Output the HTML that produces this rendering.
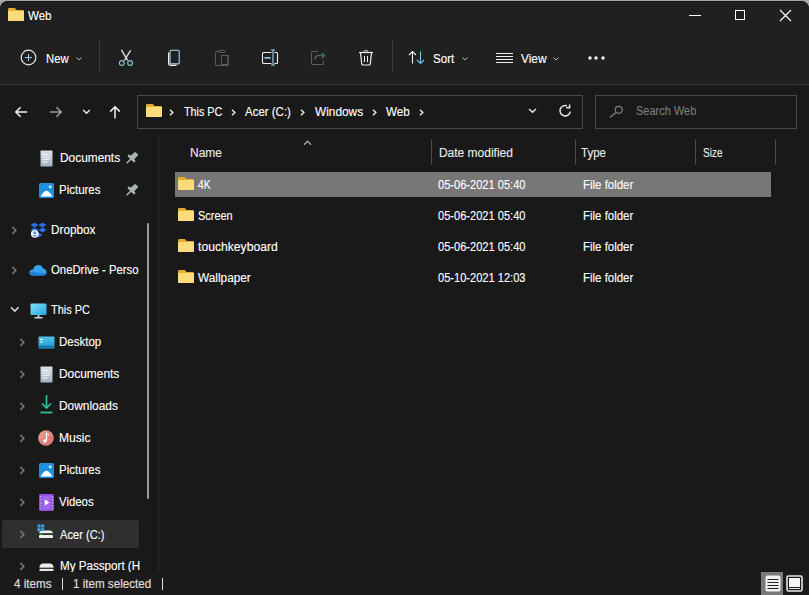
<!DOCTYPE html>
<html><head><meta charset="utf-8"><style>
html,body{margin:0;padding:0;width:809px;height:595px;overflow:hidden;background:#a8a8a8;}
body{position:relative;font-family:"Liberation Sans", sans-serif;}
.t{position:absolute;white-space:nowrap;font-family:"Liberation Sans", sans-serif;-webkit-text-stroke:0.12px currentColor;}
svg{overflow:visible;}
</style></head><body>
<div style="position:absolute;left:0px;top:0px;width:809px;height:595px;background:#a8a8a8;"></div>
<div style="position:absolute;left:0px;top:1px;width:809px;height:594px;background:#191919;border-radius:8px 8px 0 0;"></div>
<div style="position:absolute;left:0px;top:1px;width:809px;height:83px;background:#202020;border-radius:8px 8px 0 0;border-top:1px solid #161616;box-sizing:border-box;"></div>
<div style="position:absolute;left:0px;top:82px;width:809px;height:2px;background:#1d1d1d;"></div>
<div style="position:absolute;left:0px;top:84px;width:809px;height:1px;background:#383838;"></div>
<svg style="position:absolute;left:8px;top:8px;" width="16" height="13" viewBox="0 0 16 13"><path d="M0 1.2 Q0 0 1.2 0 H6.8 L8.6 2 H14.8 Q16 2 16 3.2 V11.8 Q16 13 14.8 13 H1.2 Q0 13 0 11.8 Z" fill="#e4ae36"/>
<path d="M0 4.2 Q0 3 1.2 3 H14.8 Q16 3 16 4.2 V11.8 Q16 13 14.8 13 H1.2 Q0 13 0 11.8 Z" fill="#fbdb7a"/></svg>
<div class="t" style="left:27.90px;top:8.74px;font-size:12px;line-height:15px;color:#ffffff;transform:scaleX(0.9603);transform-origin:0 0;">Web</div>
<div style="position:absolute;left:689px;top:15px;width:12px;height:1px;background:#ffffff;"></div>
<div style="position:absolute;left:735px;top:10px;width:10px;height:10px;background:transparent;border:1px solid #fff;box-sizing:border-box;"></div>
<svg style="position:absolute;left:779px;top:9px;" width="13" height="13" viewBox="0 0 13 13"><path d="M1 1 L12 12 M12 1 L1 12" stroke="#fff" stroke-width="1.1"/></svg>
<svg style="position:absolute;left:20px;top:49px;" width="17" height="17" viewBox="0 0 17 17"><circle cx="8.5" cy="8.5" r="7.3" fill="none" stroke="#e6e6e6" stroke-width="1.2"/><path d="M8.5 5 V12 M5 8.5 H12" stroke="#9ad4ea" stroke-width="1"/></svg>
<div class="t" style="left:45.80px;top:51.74px;font-size:12px;line-height:15px;color:#ffffff;transform:scaleX(0.9408);transform-origin:0 0;">New</div>
<svg style="position:absolute;left:75.5px;top:57px;" width="6" height="4" viewBox="0 0 6 4"><path d="M0.5 0.6 L3.0 3 L5.5 0.6" fill="none" stroke="#bdbdbd" stroke-width="1"/></svg>
<div style="position:absolute;left:99px;top:40px;width:1px;height:32px;background:#3a3a3a;"></div>
<svg style="position:absolute;left:118px;top:48px;" width="16" height="19" viewBox="0 0 16 19"><path d="M3.4 1.8 L9.6 12.4 M12.6 2.4 L6.4 12.4" stroke="#e6e0e0" stroke-width="1.3" fill="none"/><circle cx="3.8" cy="15" r="2.4" fill="none" stroke="#8cc4d4" stroke-width="1.1"/><circle cx="12.1" cy="15" r="2.4" fill="none" stroke="#8cc4d4" stroke-width="1.1"/></svg>
<svg style="position:absolute;left:166px;top:48px;" width="16" height="19" viewBox="0 0 16 19"><rect x="4" y="2.3" width="9.2" height="13.6" rx="1" fill="none" stroke="#a4d4ea" stroke-width="1.1"/><path d="M2.6 4.5 V15.8 Q2.6 17.3 4.2 17.3 H10.5" fill="none" stroke="#ececec" stroke-width="1.2"/></svg>
<svg style="position:absolute;left:214px;top:48px;" width="16" height="19" viewBox="0 0 16 19"><path d="M4 3.5 H2.5 Q1.5 3.5 1.5 4.5 V16.5 Q1.5 17.5 2.5 17.5 H13 Q14 17.5 14 16.5 V7" fill="none" stroke="#5a5a5a" stroke-width="1.1"/><rect x="4" y="2.5" width="7" height="2" rx="1" fill="none" stroke="#5a5a5a" stroke-width="1"/><rect x="7.5" y="7.5" width="6.5" height="9" fill="none" stroke="#5a5a5a" stroke-width="1"/></svg>
<svg style="position:absolute;left:261px;top:48px;" width="18" height="19" viewBox="0 0 18 19"><path d="M10.5 4.5 H2.5 Q1.5 4.5 1.5 5.5 V14.5 Q1.5 15.5 2.5 15.5 H10.5 M13.5 4.5 H15.5 Q16.5 4.5 16.5 5.5 V14.5 Q16.5 15.5 15.5 15.5 H13.5" fill="none" stroke="#f0f0f0" stroke-width="1.1"/><rect x="3.5" y="9" width="6" height="1.6" fill="#9fd4ea"/><path d="M12 2.5 V16.5 M10 2 H14 M10 17 H14" stroke="#9fd4ea" stroke-width="1.1" fill="none"/></svg>
<svg style="position:absolute;left:310px;top:48px;" width="17" height="19" viewBox="0 0 17 19"><path d="M8 3.5 H2.5 Q1.5 3.5 1.5 4.5 V15.5 Q1.5 16.5 2.5 16.5 H12.5 Q13.5 16.5 13.5 15.5 V13" fill="none" stroke="#5c5c5c" stroke-width="1.1"/><path d="M5 11.5 Q5 7.5 9 7.5 H14.5 M11.8 4.8 L14.5 7.5 L11.8 10.2" fill="none" stroke="#3d6570" stroke-width="1.6"/></svg>
<svg style="position:absolute;left:358px;top:48px;" width="16" height="19" viewBox="0 0 16 19"><path d="M1 4.5 H15" stroke="#f0f0f0" stroke-width="1.2"/><path d="M6 4 Q6 2.5 8 2.5 Q10 2.5 10 4" fill="none" stroke="#c8c8c8" stroke-width="1.1"/><path d="M2.5 5 L3.8 16.2 Q4 17 5 17 H11 Q12 17 12.2 16.2 L13.5 5" fill="none" stroke="#f0f0f0" stroke-width="1.2"/><path d="M6.5 8 V14 M9.5 8 V14" stroke="#f0f0f0" stroke-width="1"/></svg>
<div style="position:absolute;left:392px;top:40px;width:1px;height:32px;background:#3a3a3a;"></div>
<svg style="position:absolute;left:408px;top:50px;" width="19" height="15" viewBox="0 0 19 15"><path d="M4.5 1.5 V13.5 M1 5 L4.5 1.5 L8 5" fill="none" stroke="#f0f0f0" stroke-width="1.1"/><path d="M12.5 1.5 V13.5 M9 10 L12.5 13.5 L16 10" fill="none" stroke="#7cc0e6" stroke-width="1.1"/></svg>
<div class="t" style="left:433.20px;top:51.74px;font-size:12px;line-height:15px;color:#ffffff;transform:scaleX(0.9703);transform-origin:0 0;">Sort</div>
<svg style="position:absolute;left:462px;top:57px;" width="6" height="4" viewBox="0 0 6 4"><path d="M0.5 0.6 L3.0 3 L5.5 0.6" fill="none" stroke="#bdbdbd" stroke-width="1"/></svg>
<svg style="position:absolute;left:496px;top:52px;" width="17" height="12" viewBox="0 0 17 12"><path d="M0 1.5 H17 M0 4.5 H17 M0 7.5 H17 M0 10.5 H17" stroke="#f0f0f0" stroke-width="1"/></svg>
<div class="t" style="left:520.50px;top:51.74px;font-size:12px;line-height:15px;color:#ffffff;transform:scaleX(0.9913);transform-origin:0 0;">View</div>
<svg style="position:absolute;left:553px;top:57px;" width="6" height="4" viewBox="0 0 6 4"><path d="M0.5 0.6 L3.0 3 L5.5 0.6" fill="none" stroke="#bdbdbd" stroke-width="1"/></svg>
<svg style="position:absolute;left:587.5px;top:56px;" width="4" height="4" viewBox="0 0 4 4"><circle cx="2" cy="2" r="1.7" fill="#f2f2f2"/></svg>
<svg style="position:absolute;left:594px;top:56px;" width="4" height="4" viewBox="0 0 4 4"><circle cx="2" cy="2" r="1.7" fill="#f2f2f2"/></svg>
<svg style="position:absolute;left:600.5px;top:56px;" width="4" height="4" viewBox="0 0 4 4"><circle cx="2" cy="2" r="1.7" fill="#f2f2f2"/></svg>
<svg style="position:absolute;left:14px;top:106px;" width="14" height="12" viewBox="0 0 14 12"><path d="M13.2 6 H1.8 M6.6 1.2 L1.8 6 L6.6 10.8" fill="none" stroke="#f2f2f2" stroke-width="1.5"/></svg>
<svg style="position:absolute;left:49px;top:106px;" width="14" height="12" viewBox="0 0 14 12"><path d="M0.8 6 H12.2 M7.4 1.2 L12.2 6 L7.4 10.8" fill="none" stroke="#9c9c9c" stroke-width="1.5"/></svg>
<svg style="position:absolute;left:82px;top:108.5px;" width="10" height="7" viewBox="0 0 10 7"><path d="M1.2 1 L4.5 4.3 L7.8 1" fill="none" stroke="#ececec" stroke-width="1.5"/></svg>
<svg style="position:absolute;left:109px;top:105px;" width="13" height="14" viewBox="0 0 13 14"><path d="M6 13.5 V1.8 M1.2 6.6 L6 1.8 L10.8 6.6" fill="none" stroke="#f2f2f2" stroke-width="1.5"/></svg>
<div style="position:absolute;left:137px;top:95px;width:446px;height:34px;background:transparent;border:1px solid #484848;box-sizing:border-box;"></div>
<svg style="position:absolute;left:146px;top:104px;" width="16" height="13" viewBox="0 0 16 13"><path d="M0 1.2 Q0 0 1.2 0 H6.8 L8.6 2 H14.8 Q16 2 16 3.2 V11.8 Q16 13 14.8 13 H1.2 Q0 13 0 11.8 Z" fill="#e4ae36"/>
<path d="M0 4.2 Q0 3 1.2 3 H14.8 Q16 3 16 4.2 V11.8 Q16 13 14.8 13 H1.2 Q0 13 0 11.8 Z" fill="#fbdb7a"/></svg>
<svg style="position:absolute;left:169px;top:109.2px;" width="5" height="7" viewBox="0 0 5 7"><path d="M1 0.8 L3.8 3.5 L1 6.2" fill="none" stroke="#e6e6e6" stroke-width="1.5"/></svg>
<div class="t" style="left:183.60px;top:104.54px;font-size:12px;line-height:15px;color:#ffffff;transform:scaleX(0.8952);transform-origin:0 0;">This PC</div>
<svg style="position:absolute;left:231px;top:109.2px;" width="5" height="7" viewBox="0 0 5 7"><path d="M1 0.8 L3.8 3.5 L1 6.2" fill="none" stroke="#e6e6e6" stroke-width="1.5"/></svg>
<div class="t" style="left:245.30px;top:104.54px;font-size:12px;line-height:15px;color:#ffffff;transform:scaleX(0.9562);transform-origin:0 0;">Acer (C:)</div>
<svg style="position:absolute;left:300px;top:109.2px;" width="5" height="7" viewBox="0 0 5 7"><path d="M1 0.8 L3.8 3.5 L1 6.2" fill="none" stroke="#e6e6e6" stroke-width="1.5"/></svg>
<div class="t" style="left:314.60px;top:104.54px;font-size:12px;line-height:15px;color:#ffffff;transform:scaleX(0.9881);transform-origin:0 0;">Windows</div>
<svg style="position:absolute;left:371.5px;top:109.2px;" width="5" height="7" viewBox="0 0 5 7"><path d="M1 0.8 L3.8 3.5 L1 6.2" fill="none" stroke="#e6e6e6" stroke-width="1.5"/></svg>
<div class="t" style="left:386.00px;top:104.54px;font-size:12px;line-height:15px;color:#ffffff;transform:scaleX(0.9684);transform-origin:0 0;">Web</div>
<svg style="position:absolute;left:418.5px;top:109.2px;" width="5" height="7" viewBox="0 0 5 7"><path d="M1 0.8 L3.8 3.5 L1 6.2" fill="none" stroke="#e6e6e6" stroke-width="1.5"/></svg>
<svg style="position:absolute;left:527.5px;top:108.3px;" width="10" height="6" viewBox="0 0 10 6"><path d="M1 1 L4.5 4.3 L8 1" fill="none" stroke="#e6e6e6" stroke-width="1.4"/></svg>
<svg style="position:absolute;left:558px;top:104px;" width="14" height="14" viewBox="0 0 14 14"><path d="M12.3 7.6 A5.2 5.2 0 1 1 8.9 1.8" fill="none" stroke="#e8e8e8" stroke-width="1.5"/><path d="M8.3 3.8 H11.6 V0.4" fill="none" stroke="#f0f0f0" stroke-width="1.5"/></svg>
<div style="position:absolute;left:595px;top:95px;width:202px;height:34px;background:transparent;border:1px solid #484848;box-sizing:border-box;"></div>
<svg style="position:absolute;left:608px;top:105px;" width="16" height="14" viewBox="0 0 16 14"><circle cx="10.7" cy="4.8" r="3.5" fill="none" stroke="#7e7e7e" stroke-width="1.2"/><path d="M8.2 7.4 L1.8 12.6" stroke="#7e7e7e" stroke-width="1.3"/></svg>
<div class="t" style="left:636.00px;top:104.44px;font-size:12px;line-height:15px;color:#7c7c7c;transform:scaleX(0.9163);transform-origin:0 0;">Search Web</div>
<div style="position:absolute;left:158px;top:137px;width:1px;height:458px;background:#2a2a2a;"></div>
<div style="position:absolute;left:146.5px;top:223px;width:2px;height:276px;background:#9c9c9c;border-radius:1px;"></div>
<svg style="position:absolute;left:39.5px;top:149.5px;" width="13" height="17" viewBox="0 0 13 17"><defs><linearGradient id="dg" x1="0" y1="0" x2="0" y2="1"><stop offset="0" stop-color="#dde3ea"/><stop offset="1" stop-color="#a4b0c0"/></linearGradient></defs><rect x="0.5" y="0.5" width="12" height="16" rx="0.8" fill="url(#dg)"/><path d="M2.5 4.5 H7.5 M2.5 7 H9.5 M2.5 9.5 H9.5 M2.5 12 H7.5" stroke="#f4f6fa" stroke-width="1"/></svg>
<div class="t" style="left:59.80px;top:150.64px;font-size:12px;line-height:15px;color:#ffffff;transform:scaleX(0.9903);transform-origin:0 0;">Documents</div>
<svg style="position:absolute;left:124px;top:151px;" width="14" height="14" viewBox="0 0 14 14"><g transform="rotate(45 8 7)"><rect x="5.6" y="0.3" width="4.8" height="6.8" rx="1.2" fill="#a9b4b8"/><rect x="3.2" y="6.3" width="9.6" height="2.6" rx="1" fill="#a9b4b8"/><path d="M8 8.5 V14.5" stroke="#b8bcbe" stroke-width="1.4"/></g></svg>
<svg style="position:absolute;left:38.5px;top:182.5px;" width="15" height="15" viewBox="0 0 15 15"><rect x="0" y="0" width="15" height="15" rx="1.5" fill="#1e90e2"/><path d="M1.5 13.5 Q3 10.5 5 9 Q7.5 6.5 10 9 Q12 10.5 13.5 13.5 Z" fill="#ffffff"/><circle cx="11.2" cy="3.8" r="1.5" fill="#cfe8ff"/></svg>
<div class="t" style="left:59.30px;top:182.54px;font-size:12px;line-height:15px;color:#ffffff;transform:scaleX(0.9574);transform-origin:0 0;">Pictures</div>
<svg style="position:absolute;left:124px;top:183px;" width="14" height="14" viewBox="0 0 14 14"><g transform="rotate(45 8 7)"><rect x="5.6" y="0.3" width="4.8" height="6.8" rx="1.2" fill="#a9b4b8"/><rect x="3.2" y="6.3" width="9.6" height="2.6" rx="1" fill="#a9b4b8"/><path d="M8 8.5 V14.5" stroke="#b8bcbe" stroke-width="1.4"/></g></svg>
<svg style="position:absolute;left:11.0px;top:226px;" width="7" height="9" viewBox="0 0 7 9"><path d="M1.4 0.9 L4.9 4.4 L1.4 7.9" fill="none" stroke="#767676" stroke-width="1.6"/></svg>
<svg style="position:absolute;left:29.5px;top:222px;" width="17" height="17" viewBox="0 0 17 17"><path d="M4.5 0.5 L8.5 3 L4.5 5.5 L0.5 3 Z M12.5 0.5 L16.5 3 L12.5 5.5 L8.5 3 Z M4.5 5.5 L8.5 8 L4.5 10.5 L0.5 8 Z M12.5 5.5 L16.5 8 L12.5 10.5 L8.5 8 Z M8.5 10.5 L12.5 13 L8.5 15.5 L4.5 13 Z" fill="#2a6ee8"/><circle cx="4.8" cy="11.8" r="3.9" fill="#e8f0fa"/><circle cx="4.8" cy="10.8" r="1.3" fill="#3d78d8"/><path d="M2.5 14.2 Q4.8 11.8 7.1 14.2" fill="#3d78d8"/></svg>
<div class="t" style="left:51.40px;top:222.94px;font-size:12px;line-height:15px;color:#ffffff;transform:scaleX(0.9789);transform-origin:0 0;">Dropbox</div>
<svg style="position:absolute;left:11.0px;top:266px;" width="7" height="9" viewBox="0 0 7 9"><path d="M1.4 0.9 L4.9 4.4 L1.4 7.9" fill="none" stroke="#767676" stroke-width="1.6"/></svg>
<svg style="position:absolute;left:29px;top:264px;" width="18" height="12" viewBox="0 0 18 12"><path d="M4 11.5 Q0.5 11.5 0.5 8.5 Q0.5 5.5 4 5.5 Q5 1 9.5 1 Q13 1 14 4.5 Q17.5 5 17.5 8.3 Q17.5 11.5 14 11.5 Z" fill="#3aa0f0"/><path d="M4 11.5 Q0.5 11.5 0.5 8.5 Q3 6.5 9 8.5 Q14 10.5 17.5 8.3 Q17.5 11.5 14 11.5 Z" fill="#1f7fe0"/></svg>
<div class="t" style="left:51.40px;top:263.04px;font-size:12px;line-height:15px;color:#ffffff;transform:scaleX(0.9449);transform-origin:0 0;">OneDrive - Perso</div>
<svg style="position:absolute;left:9.5px;top:306px;" width="10" height="7" viewBox="0 0 10 7"><path d="M1 1.2 L4.8 5 L8.6 1.2" fill="none" stroke="#d8d8d8" stroke-width="1.6"/></svg>
<svg style="position:absolute;left:29.5px;top:302.5px;" width="17" height="16" viewBox="0 0 17 16"><defs><linearGradient id="pcg" x1="0" y1="0" x2="1" y2="1"><stop offset="0" stop-color="#7fe0f8"/><stop offset="1" stop-color="#2aa6e0"/></linearGradient></defs><rect x="0.5" y="0.5" width="16" height="11.5" rx="1" fill="url(#pcg)"/><rect x="7.5" y="12" width="2" height="2.5" fill="#b0c8d8"/><rect x="4.5" y="14" width="8" height="1.5" fill="#c8d8e8"/></svg>
<div class="t" style="left:51.10px;top:302.74px;font-size:12px;line-height:15px;color:#ffffff;transform:scaleX(0.9091);transform-origin:0 0;">This PC</div>
<svg style="position:absolute;left:19.0px;top:338px;" width="7" height="9" viewBox="0 0 7 9"><path d="M1.4 0.9 L4.9 4.4 L1.4 7.9" fill="none" stroke="#767676" stroke-width="1.6"/></svg>
<svg style="position:absolute;left:37.5px;top:335.5px;" width="17" height="13" viewBox="0 0 17 13"><defs><linearGradient id="dkg" x1="0" y1="0" x2="0" y2="1"><stop offset="0" stop-color="#50c4e8"/><stop offset="1" stop-color="#2098cc"/></linearGradient></defs><rect x="0.5" y="0.5" width="16" height="12" rx="1" fill="url(#dkg)"/><path d="M0.5 10.5 H16.5" stroke="#0f5fa0" stroke-width="1.2"/><rect x="2" y="3" width="3" height="1" fill="#e8f6ff"/><rect x="2" y="5.5" width="3" height="1" fill="#e8f6ff"/></svg>
<div class="t" style="left:59.30px;top:334.64px;font-size:12px;line-height:15px;color:#ffffff;transform:scaleX(0.9583);transform-origin:0 0;">Desktop</div>
<svg style="position:absolute;left:19.0px;top:370px;" width="7" height="9" viewBox="0 0 7 9"><path d="M1.4 0.9 L4.9 4.4 L1.4 7.9" fill="none" stroke="#767676" stroke-width="1.6"/></svg>
<svg style="position:absolute;left:39.5px;top:365.5px;" width="13" height="17" viewBox="0 0 13 17"><defs><linearGradient id="dg" x1="0" y1="0" x2="0" y2="1"><stop offset="0" stop-color="#dde3ea"/><stop offset="1" stop-color="#a4b0c0"/></linearGradient></defs><rect x="0.5" y="0.5" width="12" height="16" rx="0.8" fill="url(#dg)"/><path d="M2.5 4.5 H7.5 M2.5 7 H9.5 M2.5 9.5 H9.5 M2.5 12 H7.5" stroke="#f4f6fa" stroke-width="1"/></svg>
<div class="t" style="left:59.30px;top:366.64px;font-size:12px;line-height:15px;color:#ffffff;transform:scaleX(0.9936);transform-origin:0 0;">Documents</div>
<svg style="position:absolute;left:19.0px;top:402px;" width="7" height="9" viewBox="0 0 7 9"><path d="M1.4 0.9 L4.9 4.4 L1.4 7.9" fill="none" stroke="#767676" stroke-width="1.6"/></svg>
<svg style="position:absolute;left:39.5px;top:394px;" width="13" height="21" viewBox="0 0 13 21"><path d="M6.5 1 V14 M2 9.5 L6.5 14 L11 9.5" fill="none" stroke="#2cbf9c" stroke-width="1.7"/><path d="M0.5 18.5 H12.5" stroke="#2cbf9c" stroke-width="1.8"/></svg>
<div class="t" style="left:59.30px;top:398.54px;font-size:12px;line-height:15px;color:#ffffff;transform:scaleX(0.9921);transform-origin:0 0;">Downloads</div>
<svg style="position:absolute;left:19.0px;top:434px;" width="7" height="9" viewBox="0 0 7 9"><path d="M1.4 0.9 L4.9 4.4 L1.4 7.9" fill="none" stroke="#767676" stroke-width="1.6"/></svg>
<svg style="position:absolute;left:38px;top:429.5px;" width="16" height="16" viewBox="0 0 16 16"><defs><linearGradient id="mg" x1="0" y1="0" x2="1" y2="1"><stop offset="0" stop-color="#f0a090"/><stop offset="1" stop-color="#d46a72"/></linearGradient></defs><circle cx="8" cy="8" r="7.8" fill="url(#mg)"/><path d="M8.5 3 V10.5" stroke="#fff" stroke-width="1.2"/><circle cx="7" cy="11" r="1.7" fill="#fff"/><path d="M8.5 3 Q10.5 4 11 5.5" fill="none" stroke="#fff" stroke-width="1"/></svg>
<div class="t" style="left:59.30px;top:430.54px;font-size:12px;line-height:15px;color:#ffffff;transform:scaleX(1.0084);transform-origin:0 0;">Music</div>
<svg style="position:absolute;left:19.0px;top:466px;" width="7" height="9" viewBox="0 0 7 9"><path d="M1.4 0.9 L4.9 4.4 L1.4 7.9" fill="none" stroke="#767676" stroke-width="1.6"/></svg>
<svg style="position:absolute;left:38.5px;top:462.5px;" width="15" height="15" viewBox="0 0 15 15"><rect x="0" y="0" width="15" height="15" rx="1.5" fill="#1e90e2"/><path d="M1.5 13.5 Q3 10.5 5 9 Q7.5 6.5 10 9 Q12 10.5 13.5 13.5 Z" fill="#ffffff"/><circle cx="11.2" cy="3.8" r="1.5" fill="#cfe8ff"/></svg>
<div class="t" style="left:59.30px;top:462.64px;font-size:12px;line-height:15px;color:#ffffff;transform:scaleX(0.9574);transform-origin:0 0;">Pictures</div>
<svg style="position:absolute;left:19.0px;top:498px;" width="7" height="9" viewBox="0 0 7 9"><path d="M1.4 0.9 L4.9 4.4 L1.4 7.9" fill="none" stroke="#767676" stroke-width="1.6"/></svg>
<svg style="position:absolute;left:39px;top:493.5px;" width="15" height="17" viewBox="0 0 15 17"><rect x="0" y="0" width="15" height="17" rx="1.5" fill="#8b4fe0"/><path d="M1.8 2 V15 M13.2 2 V15" stroke="#c9a6f6" stroke-width="1.4" stroke-dasharray="1.4 1.6"/><rect x="3.5" y="1.5" width="8" height="14" fill="#a066f0"/><path d="M5.8 5.5 L10.5 8.5 L5.8 11.5 Z" fill="#fff"/></svg>
<div class="t" style="left:59.30px;top:494.64px;font-size:12px;line-height:15px;color:#ffffff;transform:scaleX(0.9486);transform-origin:0 0;">Videos</div>
<div style="position:absolute;left:2px;top:520px;width:137px;height:28px;background:#2f2f2f;border-radius:2px;"></div>
<svg style="position:absolute;left:19.0px;top:530px;" width="7" height="9" viewBox="0 0 7 9"><path d="M1.4 0.9 L4.9 4.4 L1.4 7.9" fill="none" stroke="#767676" stroke-width="1.6"/></svg>
<svg style="position:absolute;left:37px;top:524px;" width="17" height="15" viewBox="0 0 17 15"><path d="M2 9 Q2.5 6.5 5 6.5 H13 Q15.5 6.5 16 9 V9.5 H2 Z" fill="#f0f0f0"/><rect x="2" y="9.3" width="14" height="1.8" fill="#2a3a30"/><rect x="3" y="9.7" width="2" height="1" fill="#46c060"/><rect x="2" y="11" width="14" height="3" rx="0.8" fill="#eeeeee"/><rect x="0.5" y="0.5" width="3" height="3" fill="#3aa2ea"/><rect x="4.2" y="0.5" width="3" height="3" fill="#3aa2ea"/><rect x="0.5" y="4.2" width="3" height="3" fill="#3aa2ea"/><rect x="4.2" y="4.2" width="3" height="3" fill="#3aa2ea"/></svg>
<div class="t" style="left:59.70px;top:527.84px;font-size:12px;line-height:15px;color:#ffffff;transform:scaleX(0.9270);transform-origin:0 0;">Acer (C:)</div>
<svg style="position:absolute;left:19.0px;top:562px;" width="7" height="9" viewBox="0 0 7 9"><path d="M1.4 0.9 L4.9 4.4 L1.4 7.9" fill="none" stroke="#767676" stroke-width="1.6"/></svg>
<svg style="position:absolute;left:39px;top:562.5px;" width="15" height="8" viewBox="0 0 15 8"><path d="M0.5 4 Q1 0.5 4 0.5 H11 Q14 0.5 14.5 4 V5 H0.5 Z" fill="#ededed"/><rect x="0.5" y="4.6" width="14" height="1.6" fill="#3a3a3a"/><rect x="0.5" y="6" width="14" height="2" rx="0.6" fill="#e8e8e8"/></svg>
<div class="t" style="left:59.70px;top:559.44px;font-size:12px;line-height:15px;color:#ffffff;transform:scaleX(0.9693);transform-origin:0 0;">My Passport (H</div>
<div style="position:absolute;left:0px;top:572px;width:809px;height:23px;background:#1b1b1b;"></div>
<div class="t" style="left:13.90px;top:577.04px;font-size:12px;line-height:15px;color:#e0e0e0;transform:scaleX(0.9721);transform-origin:0 0;">4 items</div>
<div style="position:absolute;left:62px;top:578px;width:1px;height:12px;background:#e0e0e0;"></div>
<div class="t" style="left:73.20px;top:577.04px;font-size:12px;line-height:15px;color:#e0e0e0;transform:scaleX(0.9683);transform-origin:0 0;">1 item selected</div>
<div style="position:absolute;left:162px;top:578px;width:1px;height:12px;background:#e0e0e0;"></div>
<svg style="position:absolute;left:303px;top:139.5px;" width="9" height="6" viewBox="0 0 9 6"><path d="M1 4.8 L4.5 1.2 L8 4.8" fill="none" stroke="#a8a8a8" stroke-width="1.3"/></svg>
<div class="t" style="left:190.00px;top:146.04px;font-size:12px;line-height:15px;color:#e8e8e8;">Name</div>
<div style="position:absolute;left:431px;top:139px;width:1px;height:26px;background:#4c4c4c;"></div>
<div style="position:absolute;left:575px;top:139px;width:1px;height:26px;background:#4c4c4c;"></div>
<div style="position:absolute;left:695px;top:139px;width:1px;height:26px;background:#4c4c4c;"></div>
<div style="position:absolute;left:775px;top:139px;width:1px;height:26px;background:#4c4c4c;"></div>
<div class="t" style="left:438.90px;top:146.04px;font-size:12px;line-height:15px;color:#e8e8e8;">Date modified</div>
<div class="t" style="left:581.20px;top:145.84px;font-size:12px;line-height:15px;color:#e8e8e8;transform:scaleX(0.9605);transform-origin:0 0;">Type</div>
<div class="t" style="left:702.70px;top:145.84px;font-size:12px;line-height:15px;color:#e8e8e8;transform:scaleX(0.8365);transform-origin:0 0;">Size</div>
<div style="position:absolute;left:175px;top:172px;width:596px;height:25px;background:#777777;"></div>
<svg style="position:absolute;left:178px;top:177px;" width="16" height="13" viewBox="0 0 16 13"><path d="M0 1.2 Q0 0 1.2 0 H6.8 L8.6 2 H14.8 Q16 2 16 3.2 V11.8 Q16 13 14.8 13 H1.2 Q0 13 0 11.8 Z" fill="#e4ae36"/>
<path d="M0 4.2 Q0 3 1.2 3 H14.8 Q16 3 16 4.2 V11.8 Q16 13 14.8 13 H1.2 Q0 13 0 11.8 Z" fill="#fbdb7a"/></svg>
<div class="t" style="left:198.20px;top:178.34px;font-size:12px;line-height:15px;color:#ffffff;transform:scaleX(0.8587);transform-origin:0 0;">4K</div>
<div class="t" style="left:438.20px;top:178.34px;font-size:12px;line-height:15px;color:#ffffff;transform:scaleX(0.9235);transform-origin:0 0;">05-06-2021 05:40</div>
<div class="t" style="left:583.20px;top:178.34px;font-size:12px;line-height:15px;color:#ffffff;transform:scaleX(0.9546);transform-origin:0 0;">File folder</div>
<svg style="position:absolute;left:178px;top:208px;" width="16" height="13" viewBox="0 0 16 13"><path d="M0 1.2 Q0 0 1.2 0 H6.8 L8.6 2 H14.8 Q16 2 16 3.2 V11.8 Q16 13 14.8 13 H1.2 Q0 13 0 11.8 Z" fill="#e4ae36"/>
<path d="M0 4.2 Q0 3 1.2 3 H14.8 Q16 3 16 4.2 V11.8 Q16 13 14.8 13 H1.2 Q0 13 0 11.8 Z" fill="#fbdb7a"/></svg>
<div class="t" style="left:198.20px;top:209.34px;font-size:12px;line-height:15px;color:#ffffff;transform:scaleX(0.9104);transform-origin:0 0;">Screen</div>
<div class="t" style="left:438.20px;top:209.34px;font-size:12px;line-height:15px;color:#ffffff;transform:scaleX(0.9235);transform-origin:0 0;">05-06-2021 05:40</div>
<div class="t" style="left:583.20px;top:209.34px;font-size:12px;line-height:15px;color:#ffffff;transform:scaleX(0.9546);transform-origin:0 0;">File folder</div>
<svg style="position:absolute;left:178px;top:239px;" width="16" height="13" viewBox="0 0 16 13"><path d="M0 1.2 Q0 0 1.2 0 H6.8 L8.6 2 H14.8 Q16 2 16 3.2 V11.8 Q16 13 14.8 13 H1.2 Q0 13 0 11.8 Z" fill="#e4ae36"/>
<path d="M0 4.2 Q0 3 1.2 3 H14.8 Q16 3 16 4.2 V11.8 Q16 13 14.8 13 H1.2 Q0 13 0 11.8 Z" fill="#fbdb7a"/></svg>
<div class="t" style="left:198.20px;top:240.34px;font-size:12px;line-height:15px;color:#ffffff;transform:scaleX(1.0135);transform-origin:0 0;">touchkeyboard</div>
<div class="t" style="left:438.20px;top:240.34px;font-size:12px;line-height:15px;color:#ffffff;transform:scaleX(0.9235);transform-origin:0 0;">05-06-2021 05:40</div>
<div class="t" style="left:583.20px;top:240.34px;font-size:12px;line-height:15px;color:#ffffff;transform:scaleX(0.9546);transform-origin:0 0;">File folder</div>
<svg style="position:absolute;left:178px;top:270px;" width="16" height="13" viewBox="0 0 16 13"><path d="M0 1.2 Q0 0 1.2 0 H6.8 L8.6 2 H14.8 Q16 2 16 3.2 V11.8 Q16 13 14.8 13 H1.2 Q0 13 0 11.8 Z" fill="#e4ae36"/>
<path d="M0 4.2 Q0 3 1.2 3 H14.8 Q16 3 16 4.2 V11.8 Q16 13 14.8 13 H1.2 Q0 13 0 11.8 Z" fill="#fbdb7a"/></svg>
<div class="t" style="left:198.20px;top:271.34px;font-size:12px;line-height:15px;color:#ffffff;transform:scaleX(0.9854);transform-origin:0 0;">Wallpaper</div>
<div class="t" style="left:438.20px;top:271.34px;font-size:12px;line-height:15px;color:#ffffff;transform:scaleX(0.9235);transform-origin:0 0;">05-10-2021 12:03</div>
<div class="t" style="left:583.20px;top:271.34px;font-size:12px;line-height:15px;color:#ffffff;transform:scaleX(0.9546);transform-origin:0 0;">File folder</div>
<div style="position:absolute;left:761px;top:572px;width:22px;height:23px;background:#7a7a7a;"></div>
<svg style="position:absolute;left:765px;top:575px;" width="16" height="17" viewBox="0 0 16 17"><rect x="0.5" y="0.5" width="15" height="16" rx="2" fill="#f0f0f0"/><path d="M2.5 4.5 H13.5 M2.5 7.5 H13.5 M2.5 10.5 H13.5 M2.5 13.5 H13.5" stroke="#222" stroke-width="1"/></svg>
<svg style="position:absolute;left:786px;top:575px;" width="17" height="17" viewBox="0 0 17 17"><rect x="1" y="1" width="15" height="15" rx="1.5" fill="none" stroke="#e8e8e8" stroke-width="1.6"/><rect x="3" y="3" width="11" height="9" fill="#f4f4f4"/><path d="M3 13.5 H14" stroke="#e8e8e8" stroke-width="1"/></svg>
</body></html>
